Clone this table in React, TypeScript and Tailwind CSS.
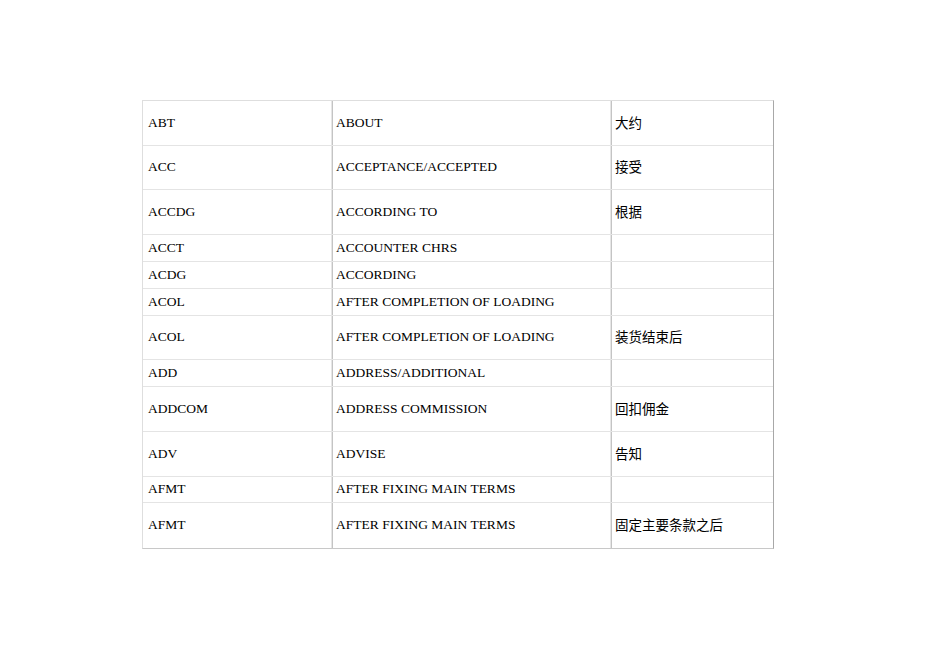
import React from "react";

const rows: { a: string; b: string; c: string; h: number }[] = [
  { a: "ABT", b: "ABOUT", c: "大约", h: 45 },
  { a: "ACC", b: "ACCEPTANCE/ACCEPTED", c: "接受", h: 44 },
  { a: "ACCDG", b: "ACCORDING TO", c: "根据", h: 45 },
  { a: "ACCT", b: "ACCOUNTER CHRS", c: "", h: 27 },
  { a: "ACDG", b: "ACCORDING", c: "", h: 27 },
  { a: "ACOL", b: "AFTER COMPLETION OF LOADING", c: "", h: 27 },
  { a: "ACOL", b: "AFTER COMPLETION OF LOADING", c: "装货结束后", h: 44 },
  { a: "ADD", b: "ADDRESS/ADDITIONAL", c: "", h: 27 },
  { a: "ADDCOM", b: "ADDRESS COMMISSION", c: "回扣佣金", h: 45 },
  { a: "ADV", b: "ADVISE", c: "告知", h: 45 },
  { a: "AFMT", b: "AFTER FIXING MAIN TERMS", c: "", h: 26 },
  { a: "AFMT", b: "AFTER FIXING MAIN TERMS", c: "固定主要条款之后", h: 45 },
];

export default function App() {
  return (
    <div className="min-h-[672px] w-[950px] bg-white pt-[100px] pl-[142px]">
      <div className="w-[632px] border-t border-l border-t-[#dedede] border-l-[#dedede] border-r border-b border-r-[#a8a8a8] border-b-[#c8c8c8]">
        {rows.map((r, i) => (
          <div
            key={i}
            className="grid grid-cols-[189px_279px_162px] border-b border-[#e4e4e4] last:border-b-0"
            style={{ height: r.h }}
          >
            <div className="flex items-center border-r border-[#e6e6e6] pl-[5px] text-[13.5px] text-black [font-family:'Liberation_Serif',serif]">
              {r.a}
            </div>
            <div className="flex items-center border-l border-r border-l-[#c4c4c4] border-r-[#e6e6e6] pl-[3px] text-[13.5px] text-black [font-family:'Liberation_Serif',serif]">
              {r.b}
            </div>
            <div className="flex items-center border-l border-l-[#c4c4c4] pl-[3px] text-[13.5px] text-black [font-family:'Noto_Sans_CJK_SC',sans-serif]">
              <span className="-translate-y-px">{r.c}</span>
            </div>
          </div>
        ))}
      </div>
    </div>
  );
}
